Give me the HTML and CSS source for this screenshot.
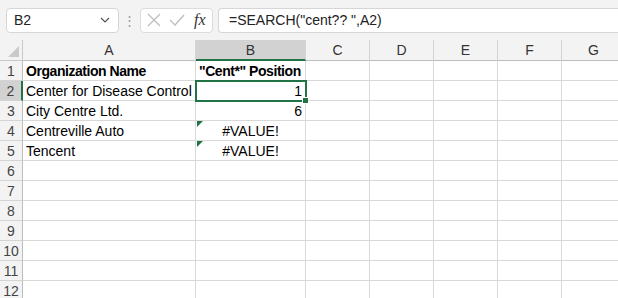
FILE: index.html
```html
<!DOCTYPE html>
<html lang="en">
<head>
<meta charset="utf-8"/>
<title>SEARCH wildcard</title>
<link rel="stylesheet" href="styles.css">
</head>
<body>
<div class="toolbar">
  <div class="namebox">
    <span>B2</span>
    <svg class="chev" width="10" height="6" viewBox="0 0 10 6"><path d="M1 1 L5 5 L9 1" fill="none" stroke="#555" stroke-width="1.2"/></svg>
  </div>
  <div class="dots">&#8942;</div>
  <div class="fbtns">
    <svg width="14" height="14" viewBox="0 0 14 14"><path d="M1 1 L13 13 M13 1 L1 13" stroke="#bdbdbd" stroke-width="1.3"/></svg>
    <svg width="16" height="14" viewBox="0 0 16 14"><path d="M1 7 L6 12 L15 2" fill="none" stroke="#bdbdbd" stroke-width="1.3"/></svg>
    <span class="fx">fx</span>
  </div>
  <div class="formula">=SEARCH("cent?? ",A2)</div>
</div>

<div class="sheet">
  <div class="corner"></div>
  <div class="colhead">A</div>
  <div class="colhead sel">B</div>
  <div class="colhead">C</div>
  <div class="colhead">D</div>
  <div class="colhead">E</div>
  <div class="colhead">F</div>
  <div class="colhead">G</div>

  <div class="rowhead">1</div>
  <div class="cell bold">Organization Name</div>
  <div class="cell bold">"Cent*" Position</div>
  <div class="cell"></div><div class="cell"></div><div class="cell"></div><div class="cell"></div><div class="cell"></div>

  <div class="rowhead sel">2</div>
  <div class="cell">Center for Disease Control</div>
  <div class="cell num active">1</div>
  <div class="cell"></div><div class="cell"></div><div class="cell"></div><div class="cell"></div><div class="cell"></div>

  <div class="rowhead">3</div>
  <div class="cell">City Centre Ltd.</div>
  <div class="cell num">6</div>
  <div class="cell"></div><div class="cell"></div><div class="cell"></div><div class="cell"></div><div class="cell"></div>

  <div class="rowhead">4</div>
  <div class="cell">Centreville Auto</div>
  <div class="cell err">#VALUE!</div>
  <div class="cell"></div><div class="cell"></div><div class="cell"></div><div class="cell"></div><div class="cell"></div>

  <div class="rowhead">5</div>
  <div class="cell">Tencent</div>
  <div class="cell err">#VALUE!</div>
  <div class="cell"></div><div class="cell"></div><div class="cell"></div><div class="cell"></div><div class="cell"></div>

  <div class="rowhead">6</div>
  <div class="cell"></div><div class="cell"></div><div class="cell"></div><div class="cell"></div><div class="cell"></div><div class="cell"></div><div class="cell"></div>
  <div class="rowhead">7</div>
  <div class="cell"></div><div class="cell"></div><div class="cell"></div><div class="cell"></div><div class="cell"></div><div class="cell"></div><div class="cell"></div>
  <div class="rowhead">8</div>
  <div class="cell"></div><div class="cell"></div><div class="cell"></div><div class="cell"></div><div class="cell"></div><div class="cell"></div><div class="cell"></div>
  <div class="rowhead">9</div>
  <div class="cell"></div><div class="cell"></div><div class="cell"></div><div class="cell"></div><div class="cell"></div><div class="cell"></div><div class="cell"></div>
  <div class="rowhead">10</div>
  <div class="cell"></div><div class="cell"></div><div class="cell"></div><div class="cell"></div><div class="cell"></div><div class="cell"></div><div class="cell"></div>
  <div class="rowhead">11</div>
  <div class="cell"></div><div class="cell"></div><div class="cell"></div><div class="cell"></div><div class="cell"></div><div class="cell"></div><div class="cell"></div>
  <div class="rowhead">12</div>
  <div class="cell"></div><div class="cell"></div><div class="cell"></div><div class="cell"></div><div class="cell"></div><div class="cell"></div><div class="cell"></div>
</div>
</body>
</html>
```

FILE: styles.css
```css
body { margin: 0; width: 618px; height: 298px; overflow: hidden; background: #fff; font-family: "Liberation Sans", Arial, sans-serif; color: #000; }

.toolbar { display: flex; align-items: center; height: 40px; background: #f3f3f3; padding: 0 0 0 6px; box-sizing: border-box; }
.namebox {
  display: flex; align-items: center; justify-content: space-between;
  width: 113px; height: 25px; box-sizing: border-box;
  padding: 0 8px 0 7px;
  background: #fff; border: 1px solid #d6d6d6; border-radius: 4px;
  font-size: 14px; color: #222;
}
.dots { width: 21px; text-align: center; color: #9a9a9a; font-size: 13px; }
.fbtns {
  display: flex; align-items: center; gap: 8px;
  width: 73px; height: 25px; box-sizing: border-box; padding: 0 0 0 6px;
  background: #fff; border: 1px solid #dcdcdc; border-radius: 4px;
}
.fx { font-family: "Liberation Serif", serif; font-style: italic; font-size: 16px; color: #333; margin-left: 1px; }
.formula {
  flex: 1; margin-left: 5px; height: 25px; box-sizing: border-box;
  padding: 3px 0 0 10px;
  background: #fff; border: 1px solid #d6d6d6; border-right: none; border-radius: 4px 0 0 4px;
  font-size: 14px; color: #222;
}

.sheet {
  display: grid;
  grid-template-columns: 23px 173px 110px 64px 64px 64px 64px 64px;
  grid-template-rows: 21px;
  grid-auto-rows: 20px;
  font-size: 14px;
}
.corner { background: #f3f3f3; border-right: 1px solid #c8c8c8; border-bottom: 1px solid #c8c8c8; position: relative; }
.corner::after {
  content: ""; position: absolute; right: 3px; bottom: 3px;
  border-left: 11px solid transparent; border-bottom: 11px solid #c9c9c9;
}
.colhead {
  background: #f3f3f3; border-right: 1px solid #d4d4d4; border-bottom: 1px solid #bdbdbd;
  text-align: center; line-height: 21px; color: #333; box-sizing: border-box;
}
.colhead.sel { background: #d2d2d2; border-bottom: 2px solid #217346; line-height: 20px; }
.rowhead {
  background: #f3f3f3; border-right: 1px solid #bdbdbd; border-bottom: 1px solid #d4d4d4;
  text-align: center; line-height: 21px; color: #444; box-sizing: border-box;
}
.rowhead.sel { background: #d2d2d2; border-right: 2px solid #217346; }
.cell {
  border-right: 1px solid #d8d8d8; border-bottom: 1px solid #d8d8d8;
  box-sizing: border-box; padding: 0 3px; line-height: 21px; white-space: nowrap; overflow: visible;
  position: relative;
}
.bold { font-weight: bold; letter-spacing: -0.45px; }
.num { text-align: right; }
.err { text-align: center; }
.err::before {
  content: ""; position: absolute; left: 1px; top: 0;
  border-top: 6px solid #217346; border-right: 6px solid transparent;
}
.active { outline: 2px solid #217346; outline-offset: -1px; z-index: 1; }
.active::after {
  content: ""; position: absolute; right: -4px; bottom: -4px;
  width: 5px; height: 5px; background: #217346; border: 1px solid #fff;
}
```
